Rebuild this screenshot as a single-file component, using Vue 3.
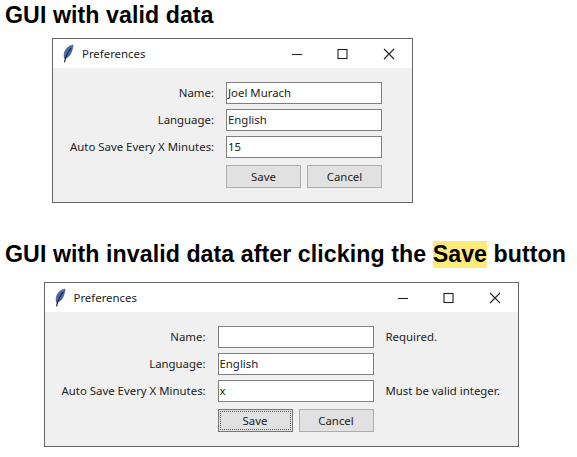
<template>
  <div class="page">
    <section v-for="win in windows" :key="win.heading" :class="['block', win.cls]">
      <h2 class="heading">
        <template v-if="win.mark">{{ win.heading }} <mark>{{ win.mark }}</mark> {{ win.tail }}</template>
        <template v-else>{{ win.heading }}</template>
      </h2>
      <div class="window">
        <div class="titlebar">
          <svg class="feather" width="12" height="20" viewBox="0 0 12 20">
            <path d="M11 1.2C7.6 1.4 3.4 4.2 2.4 9.2c-.4 2-.3 3.8.3 5.2 3.2-.6 5.8-3.4 7-7.2.6-2 1.2-3.8 1.3-6z" fill="#4a70b8" stroke="#26365e" stroke-width=".6" />
            <path d="M8.8 4.4C6.4 7.4 4 11.2 2.6 17.8" fill="none" stroke="#1c2438" stroke-width="1.2" stroke-linecap="round" />
          </svg>
          <span class="title">Preferences</span>
          <div class="controls">
            <svg width="12" height="12" viewBox="0 0 12 12"><path d="M1 6.5h10" stroke="#222" stroke-width="1.1" /></svg>
            <svg width="12" height="12" viewBox="0 0 12 12"><rect x="1" y="1.5" width="9" height="9" fill="none" stroke="#222" stroke-width="1.1" /></svg>
            <svg width="12" height="12" viewBox="0 0 12 12"><path d="M1 1l10 10M11 1L1 11" stroke="#222" stroke-width="1.1" /></svg>
          </div>
        </div>
        <div class="form">
          <template v-for="row in win.rows" :key="row.label">
            <label class="label">{{ row.label }}</label>
            <div class="input">{{ row.value }}</div>
            <span class="error">{{ row.error }}</span>
          </template>
          <div class="buttons">
            <button :class="['btn', { focused: win.focused }]">Save</button>
            <button class="btn">Cancel</button>
          </div>
        </div>
      </div>
    </section>
  </div>
</template>

<script setup>
const windows = [
  {
    cls: "valid",
    heading: "GUI with valid data",
    focused: false,
    rows: [
      { label: "Name:", value: "Joel Murach", error: "" },
      { label: "Language:", value: "English", error: "" },
      { label: "Auto Save Every X Minutes:", value: "15", error: "" },
    ],
  },
  {
    cls: "invalid",
    heading: "GUI with invalid data after clicking the",
    mark: "Save",
    tail: "button",
    focused: true,
    rows: [
      { label: "Name:", value: "", error: "Required." },
      { label: "Language:", value: "English", error: "" },
      { label: "Auto Save Every X Minutes:", value: "x", error: "Must be valid integer." },
    ],
  },
];
</script>

<style>
body {
  background: #fff;
}
</style>

<style scoped>
.page {
  width: 577px;
  height: 457px;
  overflow: hidden;
  background: #fff;
  font-family: "Noto Sans", "Open Sans", sans-serif;
  color: #222;
}

.heading {
  margin: 0;
  padding-left: 5px;
  font-family: "Liberation Sans", Arial, sans-serif;
  font-size: 23.2px;
  letter-spacing: 0.06px;
  line-height: 26px;
  font-weight: bold;
  color: #000;
  white-space: nowrap;
}

.heading mark {
  display: inline-block;
  background: #ffeb7a;
  color: #000;
  line-height: 27px;
  height: 27px;
}

.valid {
  padding-top: 2px;
}

.invalid {
  margin-top: 38px;
}

.valid .window {
  margin: 10px 0 0 52px;
  width: 361px;
}

.invalid .window {
  margin: 14px 0 0 43.5px;
  width: 475px;
}

.window {
  height: 165px;
  box-sizing: border-box;
  border: 1px solid #666;
  background: #f0f0f0;
}

.titlebar {
  display: flex;
  align-items: center;
  height: 29px;
  background: #fff;
  padding-left: 9px;
}

.feather {
  margin-right: 8px;
}

.title {
  font-size: 11.4px;
}

.controls {
  margin-left: auto;
  display: flex;
  gap: 34px;
  padding-right: 17px;
}

.form {
  display: grid;
  grid-template-columns: 144px 156px auto;
  column-gap: 12px;
  row-gap: 5.5px;
  padding: 14px 0 0 17px;
  align-items: center;
}

.label {
  font-size: 11.4px;
  text-align: right;
  white-space: nowrap;
}

.input {
  box-sizing: border-box;
  height: 21.5px;
  border: 1.5px solid #7f7f7f;
  background: #fff;
  font-size: 11.4px;
  line-height: 19px;
  padding-left: 1px;
}

.error {
  font-size: 11.4px;
  white-space: nowrap;
}

.buttons {
  grid-column: 2;
  display: flex;
  justify-content: space-between;
  margin-top: 1.5px;
}

.btn {
  box-sizing: border-box;
  width: 75px;
  height: 23px;
  border: 1.5px solid #adadad;
  background: #e1e1e1;
  font-family: inherit;
  font-size: 11.4px;
  color: #222;
  padding: 0;
}

.btn.focused {
  border-color: #777;
  outline: 1px dotted #555;
  outline-offset: -3px;
}
</style>
